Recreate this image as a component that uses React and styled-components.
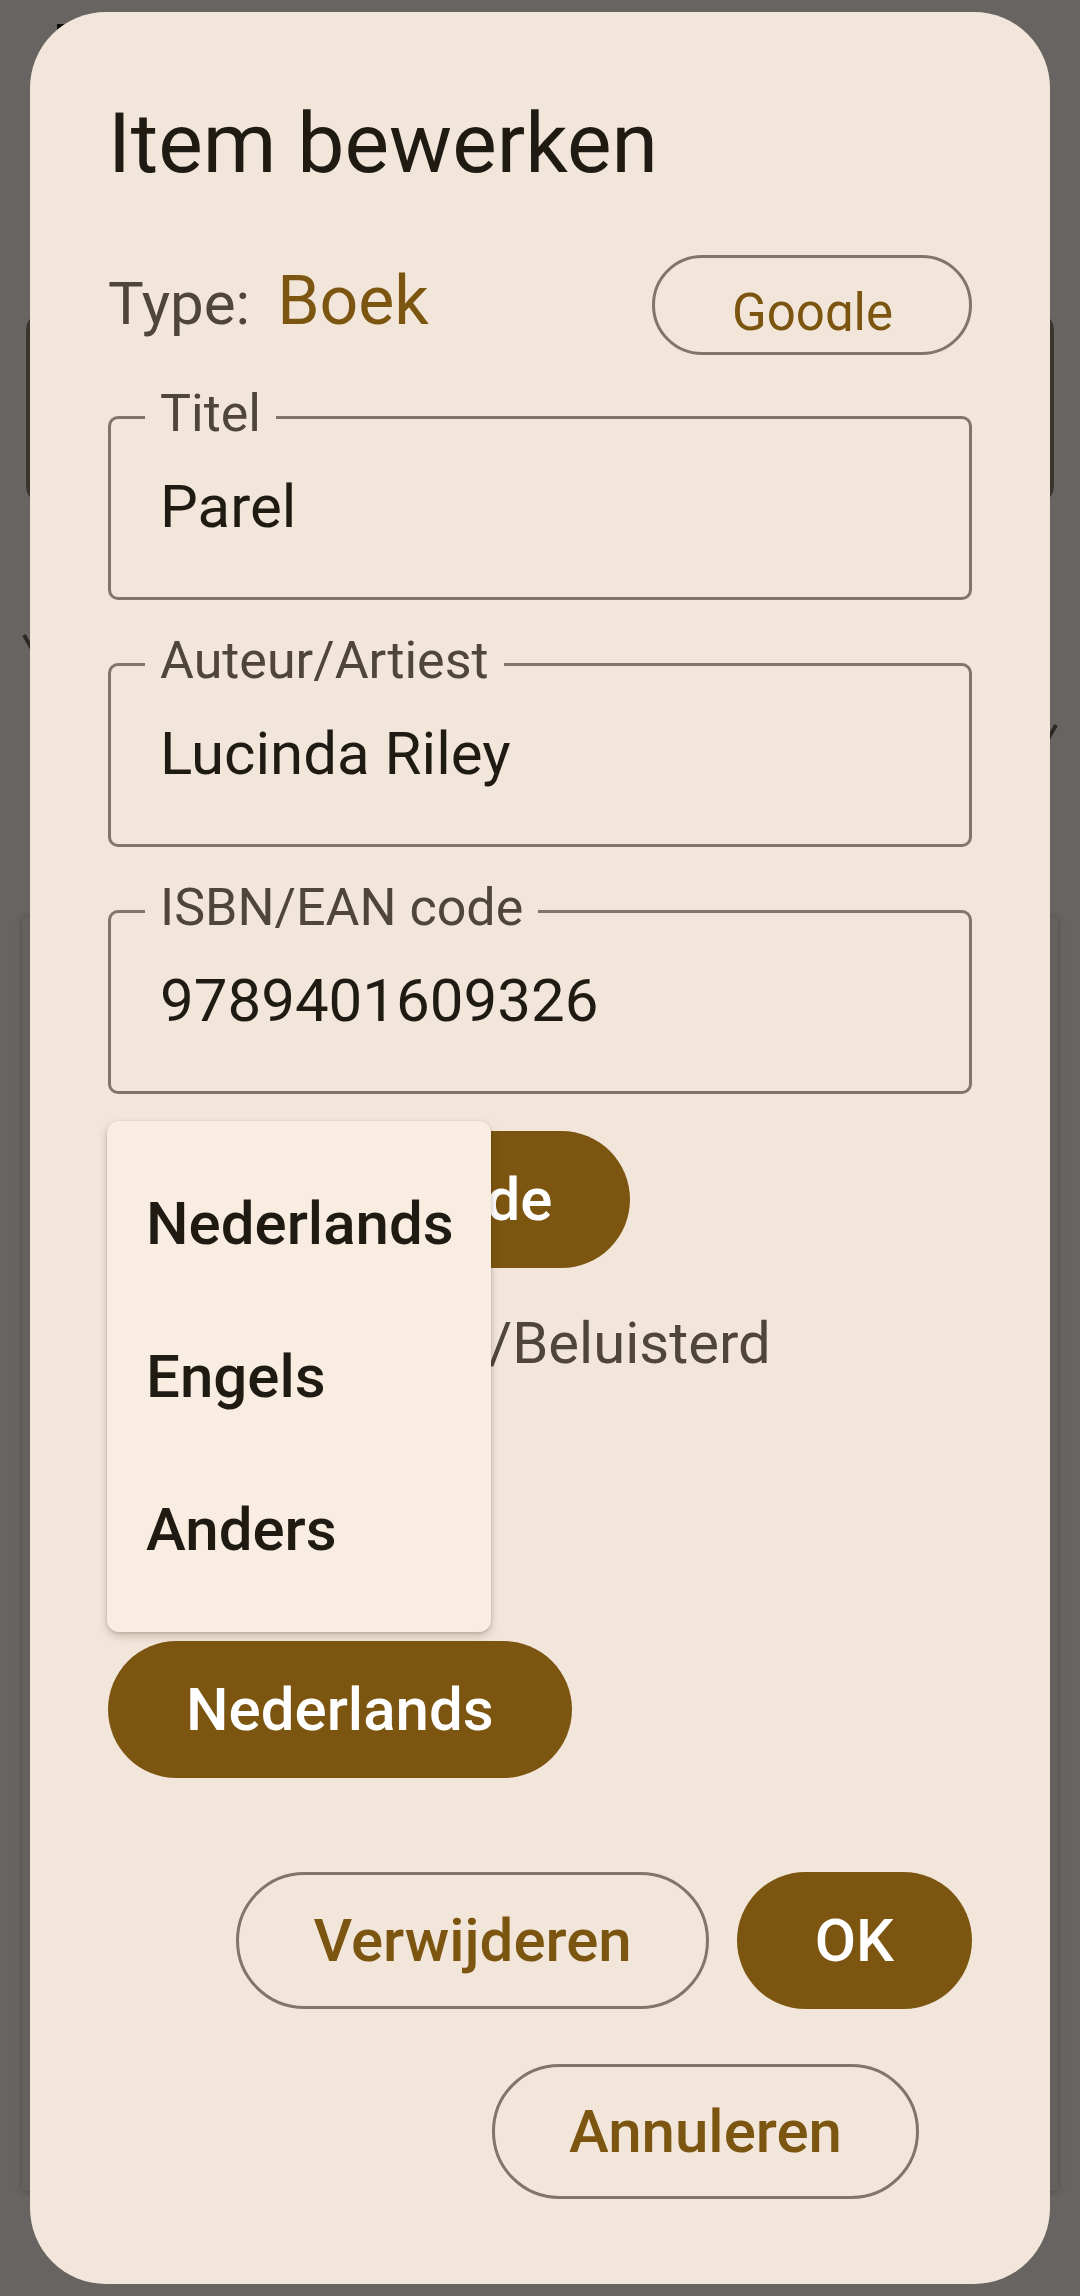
import React from "react";
import styled, { createGlobalStyle } from "styled-components";

const c = {
  scrim: "#676461",
  surface: "#f2e6db",
  menu: "#f9ede1",
  primary: "#7c5610",
  outline: "#827568",
  onSurface: "#1f1b13",
  onVariant: "#4f4539",
};

const Global = createGlobalStyle`
  html, body { margin: 0; padding: 0; }
  body {
    width: 1080px;
    height: 2296px;
    overflow: hidden;
    background: ${c.scrim};
    font-family: Roboto, "Noto Sans", Arial, sans-serif;
  }
  #root { width: 1080px; height: 2296px; }
`;

const Screen = styled.div`
  position: relative;
  width: 1080px;
  height: 2296px;
  background: ${c.scrim};
  overflow: hidden;
`;

/* dimmed app behind the dialog */
const BackApp = styled.div`
  display: flex;
  flex-direction: column;
  padding: 24px 26px 0;
`;

const BackIcon = styled.div`
  width: 64px;
  height: 48px;
  margin-left: 31px;
  background: #0e0c0a;
`;

const BackCard = styled.div`
  margin-top: 240px;
  height: 192px;
  border-radius: 18px;
  background: #3a342c;
`;

const BackMarks = styled.div`
  height: 413px;
  display: flex;
  justify-content: space-between;
  align-items: flex-start;
  padding-top: 130px;
  box-sizing: border-box;
`;

const BackMark = styled.span`
  width: 4px;
  height: 16px;
  margin-top: ${(p) => p.$top}px;
  background: #2d2823;
  transform: rotate(${(p) => p.$rot}deg);
`;

const BackSheet = styled.div`
  margin: 0 -4px;
  height: 1274px;
  background: #63605d;
  box-shadow: 0 0 6px rgba(0, 0, 0, 0.25);
`;

/* dialog */
const Dialog = styled.section`
  position: absolute;
  top: 12px;
  left: 30px;
  width: 1020px;
  box-sizing: border-box;
  padding: 82px 78px 85px;
  display: flex;
  flex-direction: column;
  background: ${c.surface};
  border-radius: 76px;
`;

const Title = styled.h1`
  margin: 0;
  font-size: 84px;
  font-weight: 400;
  line-height: 100px;
  color: ${c.onSurface};
`;

const TypeRow = styled.div`
  margin-top: 61px;
  display: flex;
  justify-content: space-between;
  align-items: flex-start;
`;

const TypeText = styled.div`
  margin-top: 6px;
  font-size: 68px;
  line-height: 80px;
`;

const TypeLabel = styled.span`
  font-size: 60px;
  color: ${c.onVariant};
`;

const TypeValue = styled.span`
  margin-left: 27px;
  color: ${c.primary};
`;

const ClipButton = styled.button`
  box-sizing: border-box;
  height: 100px;
  padding: 23px 76px 0 77px;
  display: flex;
  align-items: flex-start;
  border: 3px solid ${c.outline};
  border-radius: 50px;
  background: transparent;
  font-family: inherit;
`;

const ClipText = styled.span`
  display: block;
  height: 50px;
  overflow: hidden;
  font-size: 51px;
  line-height: 64px;
  color: ${c.primary};
`;

const Field = styled.div`
  margin-top: ${(p) => p.$gap}px;
  padding: 0 49px 55px;
  border: 3px solid ${c.outline};
  border-radius: 10px;
`;

const FieldLabel = styled.span`
  display: block;
  width: fit-content;
  margin: -34px 0 0 -15px;
  padding: 0 15px;
  background: ${c.surface};
  font-size: 52px;
  line-height: 58px;
  color: ${c.onVariant};
`;

const FieldValue = styled.div`
  margin-top: 29px;
  font-size: 60px;
  line-height: 70px;
  color: ${c.onSurface};
`;

const FilledButton = styled.button`
  align-self: flex-start;
  box-sizing: border-box;
  height: 137px;
  margin-top: ${(p) => p.$gap || 0}px;
  padding: 0 78px;
  border: none;
  border-radius: 69px;
  background: ${c.primary};
  color: #ffffff;
  font-family: inherit;
  font-size: 60px;
  font-weight: 500;
  line-height: 70px;
  white-space: nowrap;
`;

const CheckRow = styled.label`
  margin-top: 12px;
  height: 126px;
  display: flex;
  align-items: center;
  gap: 48px;
`;

const CheckBox = styled.span`
  width: 126px;
  height: 126px;
  display: flex;
  align-items: center;
  justify-content: center;
  &::before {
    content: "";
    width: 40px;
    height: 40px;
    border: 5px solid ${c.onVariant};
    border-radius: 5px;
  }
`;

const CheckText = styled.span`
  font-size: 58px;
  line-height: 70px;
  color: ${c.onVariant};
`;

const LangAnchor = styled.div`
  position: relative;
  align-self: flex-start;
  margin-top: 235px;
  display: flex;
`;

const Menu = styled.ul`
  position: absolute;
  left: -1px;
  bottom: calc(100% + 9px);
  width: 384px;
  box-sizing: border-box;
  margin: 0;
  padding: 26px 0;
  list-style: none;
  background: ${c.menu};
  border-radius: 12px;
  box-shadow: 0 4px 10px rgba(60, 40, 20, 0.22), 0 1px 3px rgba(60, 40, 20, 0.18);
`;

const MenuItem = styled.li`
  height: 153px;
  display: flex;
  align-items: center;
  padding: 0 38px 0 39px;
  font-size: 60px;
  font-weight: 500;
  color: ${c.onSurface};
  white-space: nowrap;
`;

const Actions = styled.div`
  margin-top: 94px;
  display: flex;
  flex-direction: column;
  align-items: flex-end;
  gap: 55px;
`;

const ActionRow = styled.div`
  display: flex;
  gap: 28px;
`;

const OutlinedButton = styled.button`
  box-sizing: border-box;
  height: ${(p) => p.$h || 137}px;
  margin-right: ${(p) => p.$mr || 0}px;
  padding: 0 74px;
  border: 3px solid ${c.outline};
  border-radius: 69px;
  background: transparent;
  color: ${c.primary};
  font-family: inherit;
  font-size: 60px;
  font-weight: 500;
  line-height: 70px;
  white-space: nowrap;
`;

const fields = [
  { label: "Titel", value: "Parel" },
  { label: "Auteur/Artiest", value: "Lucinda Riley" },
  { label: "ISBN/EAN code", value: "9789401609326" },
];

export default function App() {
  return (
    <Screen>
      <Global />
      <BackApp>
        <BackIcon />
        <BackCard />
        <BackMarks>
          <BackMark $top={0} $rot={-30} />
          <BackMark $top={90} $rot={30} />
        </BackMarks>
        <BackSheet />
      </BackApp>
      <Dialog>
        <Title>Item bewerken</Title>
        <TypeRow>
          <TypeText>
            <TypeLabel>Type:</TypeLabel>
            <TypeValue>Boek</TypeValue>
          </TypeText>
          <ClipButton>
            <ClipText>Google</ClipText>
          </ClipButton>
        </TypeRow>
        {fields.map((f, i) => (
          <Field key={f.label} $gap={i === 0 ? 61 : 63}>
            <FieldLabel>{f.label}</FieldLabel>
            <FieldValue>{f.value}</FieldValue>
          </Field>
        ))}
        <FilledButton $gap={37}>Scan barcode</FilledButton>
        <CheckRow>
          <CheckBox />
          <CheckText>Gelezen/Beluisterd</CheckText>
        </CheckRow>
        <LangAnchor>
          <FilledButton>Nederlands</FilledButton>
          <Menu>
            <MenuItem>Nederlands</MenuItem>
            <MenuItem>Engels</MenuItem>
            <MenuItem>Anders</MenuItem>
          </Menu>
        </LangAnchor>
        <Actions>
          <ActionRow>
            <OutlinedButton>Verwijderen</OutlinedButton>
            <FilledButton>OK</FilledButton>
          </ActionRow>
          <OutlinedButton $h={135} $mr={53}>
            Annuleren
          </OutlinedButton>
        </Actions>
      </Dialog>
    </Screen>
  );
}
